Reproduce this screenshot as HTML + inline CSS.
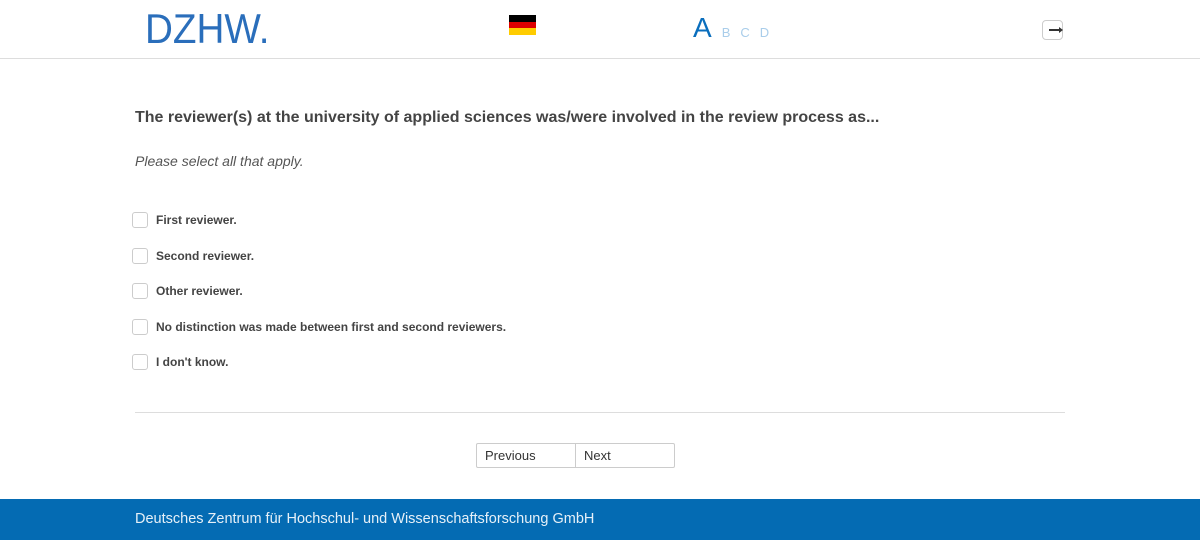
<!DOCTYPE html>
<html><head><meta charset="utf-8"><style>
*{margin:0;padding:0;box-sizing:border-box}
body{width:1200px;height:549px;background:#fff;font-family:"Liberation Sans","DejaVu Sans",sans-serif;color:#444;position:relative;overflow:hidden}
.hdr{position:absolute;left:0;top:0;width:1200px;height:59px;border-bottom:1px solid #ddd}
.logo{position:absolute;left:145px;top:5px;font-size:42px;color:#2a6ebb;letter-spacing:0;font-family:"Liberation Sans",sans-serif;font-weight:normal;transform:scaleX(0.92);transform-origin:left}
.flag{position:absolute;left:509px;top:15px;width:27px;height:20px}
.flag div{height:33.4%}
.abc{position:absolute;left:693px;top:12px;color:#0a6ebd}
.abc b{font-weight:normal;font-size:28px}
.abc span{font-size:13px;color:#a9cdea;margin-left:10px}
.exit{position:absolute;left:1042px;top:20px;width:21px;height:20px;border:1px solid #ccc;border-radius:4px}
.exit:after{content:"";position:absolute;left:6px;top:8px;width:12px;height:1.5px;background:#333}
.exit:before{content:"";position:absolute;left:16px;top:6px;border-left:4px solid #333;border-top:3px solid transparent;border-bottom:3px solid transparent}
h1{position:absolute;left:135px;top:109px;font-size:16px;font-weight:bold;color:#444;letter-spacing:0}
.hint{position:absolute;left:135px;top:153px;font-size:14px;font-style:italic;color:#555}
.opt{position:absolute;left:132px;font-size:12px;font-weight:bold;color:#444}
.opt i{position:absolute;left:0;top:0;width:16px;height:16px;border:1px solid #ccc;border-radius:3px}
.opt span{position:absolute;left:24px;top:0;white-space:nowrap;line-height:16px}
.hr{position:absolute;left:135px;top:412px;width:930px;height:1px;background:#ddd}
.btns{position:absolute;left:476px;top:443px;width:199px;height:25px;border:1px solid #ccc;border-radius:2px;font-size:13px;color:#333}
.btns div{position:absolute;top:0;height:23px;line-height:23px;padding-left:8px}
.foot{position:absolute;left:0;top:499px;width:1200px;height:41px;background:#046bb3;color:#e6f0f8;font-size:14.5px;line-height:41px;padding-left:135px}
</style></head><body>
<div class="hdr">
<div class="logo">DZHW.</div>
<div class="flag"><div style="background:#000"></div><div style="background:#d00"></div><div style="background:#fc0"></div></div>
<div class="abc"><b>A</b><span>B</span><span>C</span><span>D</span></div>
<div class="exit"></div>
</div>
<h1>The reviewer(s) at the university of applied sciences was/were involved in the review process as...</h1>
<div class="hint">Please select all that apply.</div>
<div class="opt" style="top:212px"><i></i><span>First reviewer.</span></div>
<div class="opt" style="top:248px"><i></i><span>Second reviewer.</span></div>
<div class="opt" style="top:283px"><i></i><span>Other reviewer.</span></div>
<div class="opt" style="top:319px"><i></i><span>No distinction was made between first and second reviewers.</span></div>
<div class="opt" style="top:354px"><i></i><span>I don't know.</span></div>
<div class="hr"></div>
<div class="btns"><div style="left:0;width:99px;border-right:1px solid #ccc">Previous</div><div style="left:99px">Next</div></div>
<div class="foot">Deutsches Zentrum für Hochschul- und Wissenschaftsforschung GmbH</div>
</body></html>
